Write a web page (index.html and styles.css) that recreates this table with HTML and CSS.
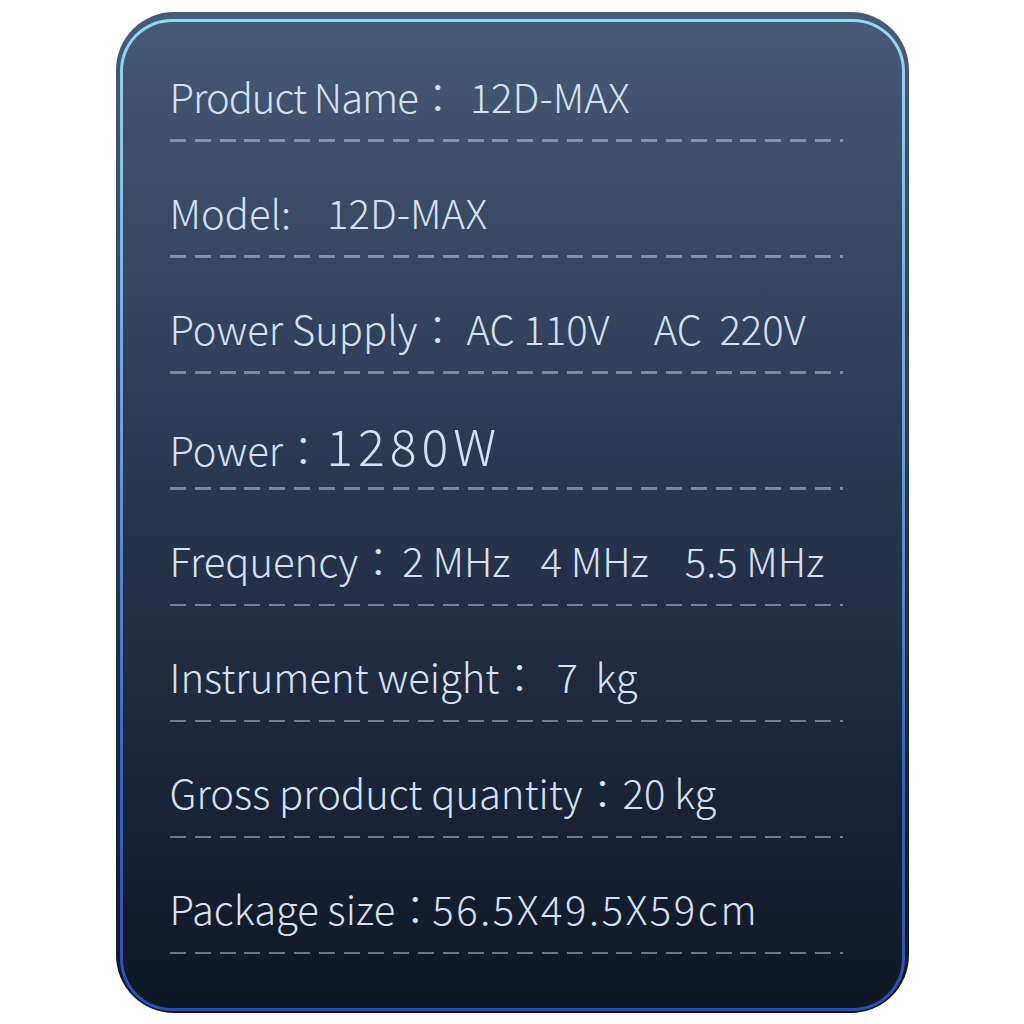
FILE: index.html
```html
<!DOCTYPE html>
<html lang="en">
<head>
    <meta charset="UTF-8">
    <meta name="viewport" content="width=device-width, initial-scale=1.0">
    <title>12D-MAX Specifications</title>
    <link rel="stylesheet" href="styles.css">
</head>
<body>
<div class="card">
    <div class="panel">

        <div class="spec-row">
            <div class="spec-text"><span class="label tight">Product Name：</span><span class="value v-name">12D-MAX</span></div>
            <div class="dash"></div>
        </div>

        <div class="spec-row">
            <div class="spec-text"><span class="label">Model:</span><span class="value v-model">12D-MAX</span></div>
            <div class="dash"></div>
        </div>

        <div class="spec-row">
            <div class="spec-text"><span class="label">Power Supply：</span><span class="value v-supply">AC 110V</span><span class="value v-supply2">AC&nbsp;&nbsp;220V</span></div>
            <div class="dash"></div>
        </div>

        <div class="spec-row">
            <div class="spec-text"><span class="label">Power：</span><span class="value big">1280W</span></div>
            <div class="dash"></div>
        </div>

        <div class="spec-row">
            <div class="spec-text"><span class="label">Frequency：</span><span class="value v-freq">2 MHz</span><span class="value v-freq2">4 MHz</span><span class="value v-freq3">5.5 MHz</span></div>
            <div class="dash thin"></div>
        </div>

        <div class="spec-row">
            <div class="spec-text"><span class="label">Instrument weight：</span><span class="value v-weight">7&nbsp;&nbsp;kg</span></div>
            <div class="dash thin"></div>
        </div>

        <div class="spec-row">
            <div class="spec-text"><span class="label">Gross product quantity：</span><span class="value v-gross">20 kg</span></div>
            <div class="dash thin"></div>
        </div>

        <div class="spec-row">
            <div class="spec-text"><span class="label">Package size：</span><span class="value spaced">56.5X49.5X59cm</span></div>
            <div class="dash thin"></div>
        </div>

    </div>
</div>
</body>
</html>
```

FILE: styles.css
```css
body {
    margin: 0;
    padding: 0;
    background-color: #fff;
    font-family: "Noto Sans CJK JP", "Noto Sans", sans-serif;
}

.card {
    width: 793px;
    height: 1001px;
    margin: 12px auto 0;
    padding: 7px 4px 2px 4px;
    box-sizing: border-box;
    border-radius: 58px;
    background: linear-gradient(180deg, #485b78 0%, #2c3952 45%, #0f1725 100%);
}

.panel {
    height: 100%;
    box-sizing: border-box;
    padding: 49px 0 0 47px;
    border: 3px solid transparent;
    border-radius: 52px;
    background:
        linear-gradient(180deg, #465975 0%, #2b3851 45%, #0f1725 100%) padding-box,
        linear-gradient(180deg, #94d8f6 0%, #6aa3dc 40%, #3b64c0 75%, #2d4fae 100%) border-box;
}

.spec-row {
    height: 116px;
}

.spec-text {
    height: 50px;
    line-height: 50px;
    font-size: 40px;
    font-weight: 300;
    color: #d5e1f2;
    white-space: nowrap;
}

.label.tight {
    letter-spacing: -1px;
}

.value.v-name {
    margin-left: 13px;
}

.value.v-model {
    margin-left: 36px;
}

.value.v-supply {
    margin-left: 9px;
}

.value.v-supply2 {
    margin-left: 44px;
}

.value.big {
    margin-left: 3px;
    font-size: 50px;
    letter-spacing: 5px;
    line-height: 50px;
}

.value.v-freq {
    margin-left: 4px;
}

.value.v-freq2 {
    margin-left: 30px;
}

.value.v-freq3 {
    margin-left: 36px;
}

.value.v-weight {
    margin-left: 17px;
}

.value.v-gross {
    margin-left: 0;
}

.value.spaced {
    margin-left: -3px;
    letter-spacing: 2.6px;
}

.dash {
    width: 673px;
    height: 3px;
    margin-top: 18px;
    background: repeating-linear-gradient(90deg, rgba(200, 210, 225, 0.5) 0 16px, transparent 16px 24.8px);
}

.dash.thin {
    height: 2px;
    margin-top: 19px;
}
```
